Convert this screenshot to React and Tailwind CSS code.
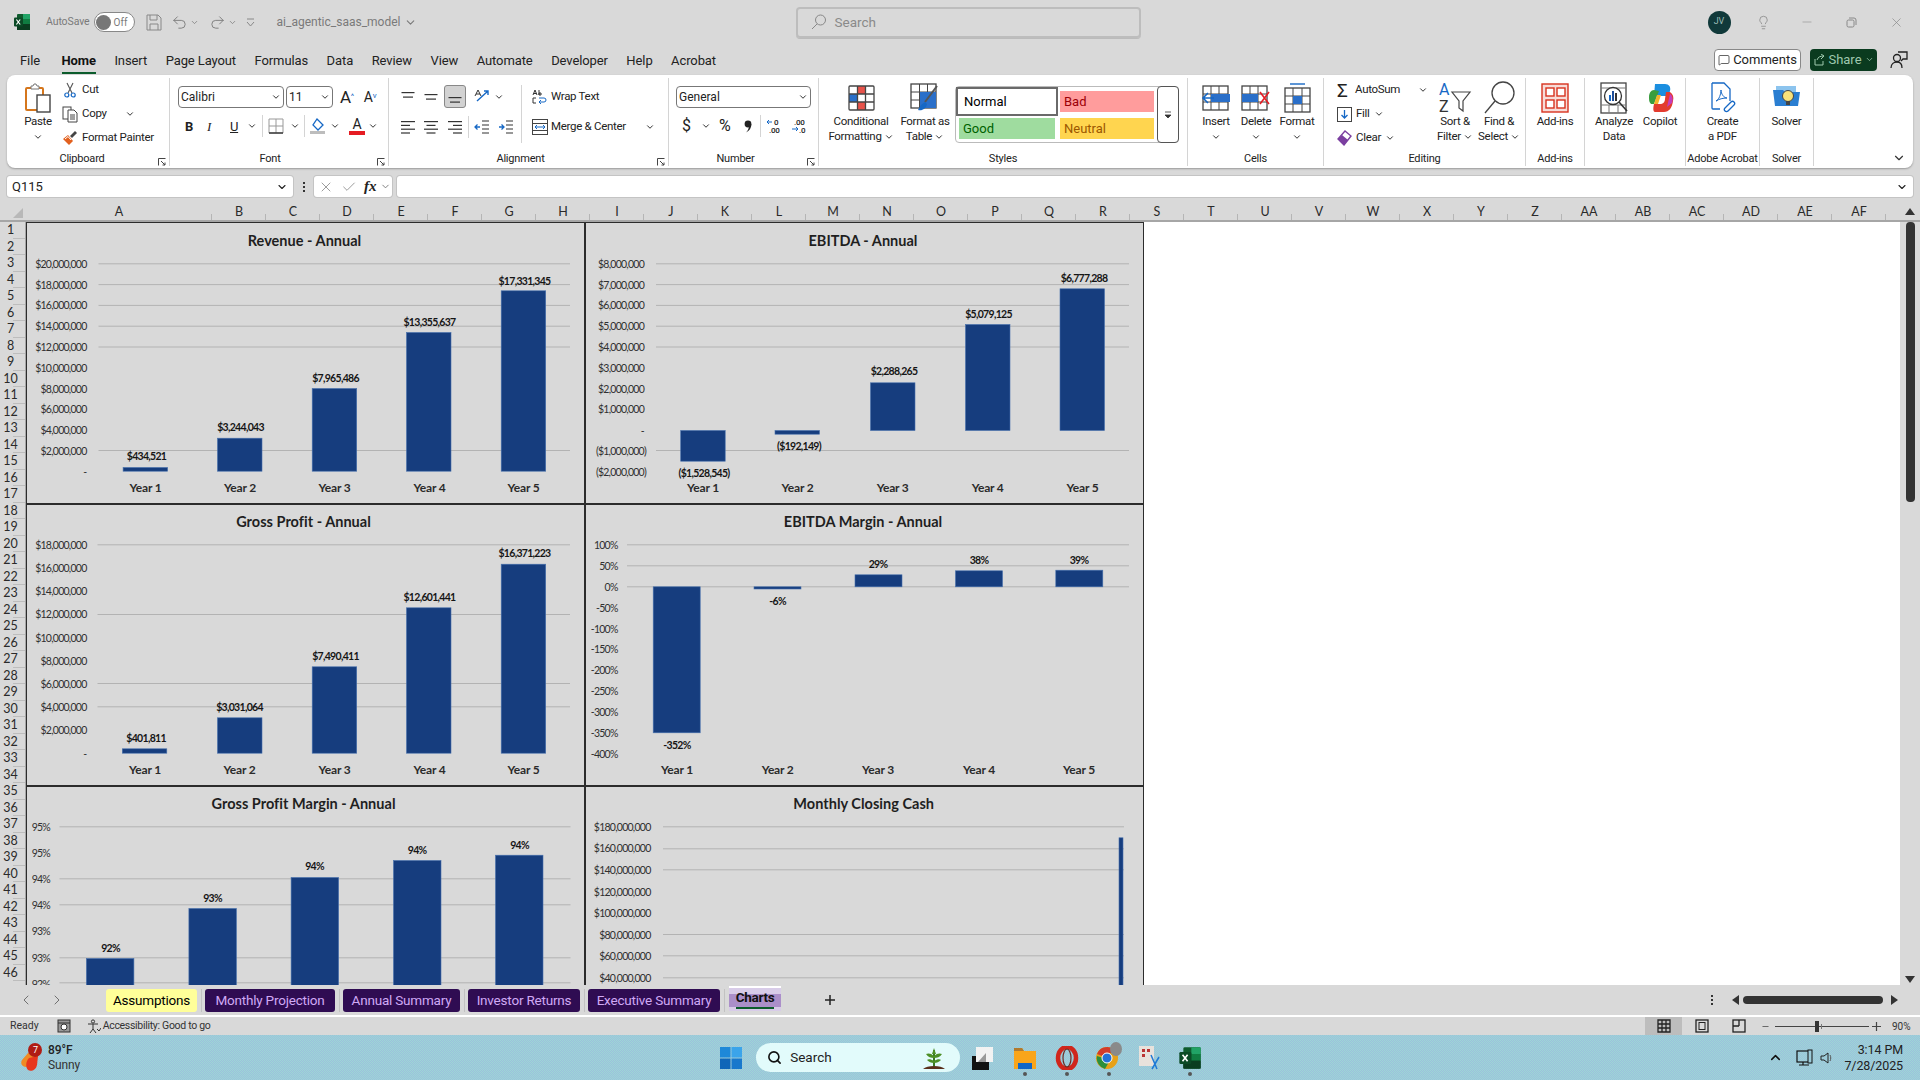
import {
  ChevronDown, ChevronLeft, ChevronRight, ChevronUp, Lightbulb, Minus, X, Check, Search,
  MessageSquare, Undo2, Redo2,
} from 'lucide-react';

const ui = 'font-["Roboto",sans-serif]';

const Chev = ({ className = '' }) => <ChevronDown size={10} strokeWidth={2.4} className={`text-[#333] shrink-0 ${className}`} />;

function ExcelLogo({ size = 18 }) {
  return (
    <svg width={size} height={size} viewBox="0 0 18 18">
      <rect x="4" y="1" width="13" height="16" rx="1" fill="#0f5c2e" />
      <rect x="10" y="1" width="7" height="5" fill="#21a366" />
      <rect x="10" y="6" width="7" height="5" fill="#107c41" />
      <rect x="4" y="11" width="13" height="6" fill="#0a3d20" />
      <rect x="1" y="4.5" width="9" height="9" rx="1" fill="#0b4a26" />
      <path d="M3.4 6.5l3.8 5M7.2 6.5l-3.8 5" stroke="#fff" strokeWidth="1.2" />
    </svg>
  );
}

function Lines({ widths, align = 'left', y = 2, step = 4.5, color = '#333' }) {
  return (
    <svg width="16" height="16" viewBox="0 0 16 16">
      {widths.map((w, i) => {
        const x = align === 'left' ? 1 : align === 'right' ? 15 - w : 8 - w / 2;
        return <rect key={i} x={x} y={y + i * step} width={w} height="1.2" fill={color} />;
      })}
    </svg>
  );
}

function Indent({ dir }) {
  return (
    <svg width="16" height="16" viewBox="0 0 16 16">
      <path d="M8 2h7M8 6h7M8 10h7M8 14h7" stroke="#333" strokeWidth="1.1" />
      <path d={dir === 'out' ? 'M6 8H1M3.5 5.5L1 8l2.5 2.5' : 'M1 8h5M3.5 5.5L6 8l-2.5 2.5'} stroke="#1668c5" strokeWidth="1.3" fill="none" />
    </svg>
  );
}

function GridBase({ children, w = 27, h = 26 }) {
  return (
    <svg width={w} height={h} viewBox="0 0 27 26">
      {children}
      <g stroke="#444" strokeWidth="1.3" fill="none">
        <rect x="1" y="1" width="25" height="24" rx="1" />
        <path d="M1 9h25M1 17h25M9.5 1v24M17.5 1v24" />
      </g>
    </svg>
  );
}

const PasteIcon = () => (
  <svg width="28" height="30" viewBox="0 0 28 30">
    <rect x="2" y="5" width="17" height="22" rx="1" fill="#fff" stroke="#d5761c" strokeWidth="2" />
    <path d="M7 5V3h2l1-2h2l1 2h2v3H7z" fill="#fff" stroke="#777" />
    <rect x="13" y="12" width="13" height="17" fill="#fff" stroke="#444" strokeWidth="1.4" />
  </svg>
);

const CutIcon = () => (
  <svg width="14" height="16" viewBox="0 0 14 16">
    <path d="M4 1l5 10M10 1L5 11" stroke="#555" strokeWidth="1.1" />
    <circle cx="3.8" cy="13" r="2" fill="none" stroke="#1668c5" strokeWidth="1.2" />
    <circle cx="10.2" cy="13" r="2" fill="none" stroke="#1668c5" strokeWidth="1.2" />
  </svg>
);

const CopyIcon = () => (
  <svg width="16" height="17" viewBox="0 0 16 17">
    <rect x="1" y="1" width="8" height="12" fill="#fff" stroke="#444" />
    <path d="M6 4h6l3 3v9H6z" fill="#fff" stroke="#444" />
    <path d="M8 9h5M8 11h5M8 13h5" stroke="#444" />
  </svg>
);

const PainterIcon = () => (
  <svg width="16" height="16" viewBox="0 0 16 16">
    <path d="M1 9l5-4 5 6-4 4z" fill="#e2611f" />
    <path d="M3 9l3-2.5 3 3.5" stroke="#fff" fill="none" />
    <path d="M8 6l5-5 2 2-5 5z" fill="#444" />
  </svg>
);

function BigButton({ icon, lines, chev, className = '' }) {
  return (
    <div className={`flex flex-col items-center shrink-0 ${className}`}>
      <div className="h-[33px] flex items-center justify-center mt-[3px]">{icon}</div>
      <div className="text-center leading-[15px] whitespace-nowrap">
        {lines.map((l, i) => (
          <div key={l} className="flex items-center justify-center gap-[2px]">
            {l}
            {chev === 'inline' && i === lines.length - 1 && <Chev />}
          </div>
        ))}
        {chev === 'below' && <div className="flex justify-center mt-[3px]"><Chev /></div>}
      </div>
    </div>
  );
}

function Group({ label, launcher, className, labelClass = '', children }) {
  return (
    <div className={`relative flex flex-col shrink-0 border-r border-[#d4d4d4] ${className}`}>
      <div className="flex-1 flex min-h-0">{children}</div>
      <div className={`h-[14px] text-center text-[11px] tracking-[-0.2px] leading-[14px] whitespace-nowrap ${labelClass}`}>{label}</div>
      {launcher && (
        <svg width="8" height="8" viewBox="0 0 8 8" className="absolute right-[3px] bottom-[0px]">
          <path d="M.5 7.5v-7h7M3 3l4 4M4.5 7H7V4.5" stroke="#444" fill="none" />
        </svg>
      )}
    </div>
  );
}

const Dropdown = ({ children, className }) => (
  <div className={`h-[22px] flex items-center justify-between pl-[2px] pr-[2px] bg-white border border-[#777] rounded-[4px] text-[12px] tracking-normal ${className}`}>
    {children}
    <Chev />
  </div>
);

const Sep = ({ className = '' }) => <div className={`w-px bg-[#d4d4d4] shrink-0 ${className}`} />;

function Ribbon() {
  return (
    <div className="mx-[7px] h-[93px] bg-white rounded-[8px] shadow-[0_1px_2px_#999] flex pt-[3px] pb-[2px] text-[11.5px] tracking-[-0.3px] text-[#222] leading-none">
      <Group label="Clipboard" launcher className="w-[163px]" labelClass="pr-[12px]">
        <BigButton className="w-[46px] ml-[8px]" icon={<PasteIcon />} lines={['Paste']} chev="below" />
        <div className="flex flex-col ml-[1px]">
          <div className="h-[24px] flex items-center gap-[4px]"><span className="w-[16px] flex justify-center"><CutIcon /></span>Cut</div>
          <div className="h-[24px] flex items-center gap-[4px]"><CopyIcon />Copy<Chev className="ml-[14px]" /></div>
          <div className="h-[24px] flex items-center gap-[4px] whitespace-nowrap"><PainterIcon />Format Painter</div>
        </div>
      </Group>

      <Group label="Font" launcher className="w-[219px]" labelClass="pr-[18px]">
        <div className="flex flex-col pl-[8px] pt-[8px]">
          <div className="flex items-center">
            <Dropdown className="w-[106px]">Calibri</Dropdown>
            <Dropdown className="w-[47px] ml-[2px]">11</Dropdown>
            <span className="ml-[7px] text-[17px] leading-none">A<sup className="text-[8px] text-[#1668c5]">^</sup></span>
            <span className="ml-[10px] text-[14px] leading-none">A<sup className="text-[8px] text-[#1668c5]">v</sup></span>
          </div>
          <div className="flex items-center h-[22px] mt-[7px] pl-[7px]">
            <span className="w-[22px] font-bold text-[13px]">B</span>
            <span className="w-[23px] italic text-[13px] font-['Liberation_Serif',serif]">I</span>
            <span className="w-[17px] underline text-[13px]">U</span>
            <Chev />
            <Sep className="h-[22px] ml-[5px]" />
            <svg width="16" height="16" viewBox="0 0 16 16" className="ml-[5px]"><path d="M1 1h14v14H1zM8 1v14M1 8h14" stroke="#999" fill="none" /><path d="M1 15h14" stroke="#333" strokeWidth="1.4" /></svg>
            <Chev className="ml-[6px]" />
            <Sep className="h-[22px] ml-[4px]" />
            <svg width="18" height="18" viewBox="0 0 18 18" className="ml-[4px]"><path d="M8 2l6 6-5 5-5-5z" fill="#fff" stroke="#1668c5" strokeWidth="1.3" /><rect x="1" y="14" width="15" height="3" fill="#bdbdbd" /></svg>
            <Chev className="ml-[3px]" />
            <div className="ml-[9px] flex flex-col items-center w-[16px]">
              <span className="text-[14px] leading-[14px]">A</span>
              <span className="w-[16px] h-[4px] bg-[#e51c23]" />
            </div>
            <Chev className="ml-[3px]" />
          </div>
        </div>
      </Group>

      <Group label="Alignment" launcher className="w-[280px]" labelClass="pr-[16px]">
        <div className="flex flex-col pl-[11px] pt-[7px]">
          <div className="flex items-center h-[23px]">
            <Lines widths={[13, 10]} align="center" y={3} />
            <div className="ml-[7px]"><Lines widths={[13, 10]} align="center" y={5} /></div>
            <div className="ml-[5px] w-[22px] h-[23px] rounded-[3px] border border-[#888] bg-[#d2d2d2] flex items-center justify-center"><Lines widths={[13, 10]} align="center" y={8} /></div>
            <svg width="17" height="17" viewBox="0 0 17 17" className="ml-[8px]"><path d="M3 13L14 3M10 3h4v4" stroke="#1668c5" strokeWidth="1.4" fill="none" /><path d="M1 8l3-6 3 6M2 6h4" stroke="#333" fill="none" /></svg>
            <Chev className="ml-[3px]" />
          </div>
          <div className="flex items-center h-[23px] mt-[7px]">
            <Lines widths={[14, 9, 14, 9]} y={2} step={3.8} />
            <div className="ml-[7px]"><Lines widths={[14, 9, 14, 9]} align="center" y={2} step={3.8} /></div>
            <div className="ml-[8px]"><Lines widths={[14, 9, 14, 9]} align="right" y={2} step={3.8} /></div>
            <Sep className="h-[22px] ml-[5px]" />
            <div className="ml-[5px]"><Indent dir="out" /></div>
            <div className="ml-[8px]"><Indent dir="in" /></div>
          </div>
        </div>
        <Sep className="h-[58px] mt-[7px] ml-[7px]" />
        <div className="flex flex-col pl-[10px] pt-[7px]">
          <div className="flex items-center h-[23px] gap-[3px] whitespace-nowrap">
            <svg width="16" height="17" viewBox="0 0 16 17"><path d="M1 7l2-5 2 5M1.5 5.5h3M7 2v5M7 5h2v2H7z" stroke="#333" fill="none" /><path d="M4 10H1v5h3" stroke="#333" fill="none" /><path d="M7 14h5a2 2 0 0 0 0-4H7M7 14l2-2M7 14l2 2" stroke="#1668c5" fill="none" /></svg>
            Wrap Text
          </div>
          <div className="flex items-center h-[23px] mt-[7px] whitespace-nowrap">
            <svg width="16" height="16" viewBox="0 0 16 16" className="mr-[3px]"><rect x=".5" y=".5" width="15" height="15" fill="#fff" stroke="#444" /><path d="M.5 4.5h15M.5 11.5h15" stroke="#444" /><path d="M3 8h10M3 8l2-2M3 8l2 2M13 8l-2-2M13 8l-2 2" stroke="#1668c5" fill="none" /></svg>
            Merge &amp; Center
            <Chev className="ml-[19px]" />
          </div>
        </div>
      </Group>

      <Group label="Number" launcher className="w-[150px]" labelClass="pr-[16px]">
        <div className="flex flex-col pl-[7px] pt-[8px]">
          <Dropdown className="w-[135px]">General</Dropdown>
          <div className="flex items-center h-[22px] mt-[7px] pl-[6px]">
            <span className="text-[16px] w-[10px]">$</span>
            <Chev className="ml-[9px]" />
            <span className="text-[16px] ml-[8px] w-[18px]">%</span>
            <svg width="8" height="13" viewBox="0 0 8 13" className="ml-[7px]"><circle cx="4" cy="4" r="3.4" fill="#222" /><path d="M7.4 4c0 4-2 7-5.4 8.5C4 10.5 5 8 5 6z" fill="#222" /></svg>
            <Sep className="h-[22px] ml-[8px]" />
            <svg width="16" height="16" viewBox="0 0 16 16" className="ml-[5px]"><text x="8" y="7" fontSize="8" fontWeight="500" fill="#222">0</text><text x="3" y="15" fontSize="8" fontWeight="500" fill="#222">.00</text><path d="M6 4H1M1 4l2-2M1 4l2 2" stroke="#1668c5" fill="none" /></svg>
            <svg width="16" height="16" viewBox="0 0 16 16" className="ml-[9px]"><text x="3" y="7" fontSize="8" fontWeight="500" fill="#222">.00</text><text x="8" y="15" fontSize="8" fontWeight="500" fill="#222">.0</text><path d="M1 11h6M7 11l-2-2M7 11l-2 2" stroke="#1668c5" fill="none" /></svg>
          </div>
        </div>
      </Group>

      <Group label="Styles" className="w-[369px]">
        <BigButton
          className="w-[66px] ml-[9px]"
          icon={(
            <GridBase>
              <rect x="9.5" y="1" width="8" height="8" fill="#e8534b" />
              <rect x="9.5" y="17" width="8" height="8" fill="#e8534b" />
              <rect x="1" y="9" width="8.5" height="8" fill="#2a6fc9" />
            </GridBase>
          )}
          lines={['Conditional', 'Formatting']}
          chev="inline"
        />
        <BigButton
          className="w-[56px] ml-[3px]"
          icon={(
            <svg width="30" height="32" viewBox="0 0 30 32">
              <rect x="1" y="2" width="25" height="24" fill="#fff" stroke="#444" strokeWidth="1.3" />
              <path d="M1 10h25M1 18h25M9.5 2v24M17.5 2v24" stroke="#444" />
              <rect x="10" y="10" width="16" height="16" fill="#2a6fc9" />
              <path d="M27 4L15 20" stroke="#555" strokeWidth="2" />
              <path d="M15 20l-4 3-3 5c4 1 8-1 9-6z" fill="#1668c5" />
            </svg>
          )}
          lines={['Format as', 'Table']}
          chev="inline"
        />
        <div className="ml-[2px] mt-[8px] h-[57px] w-[224px] flex border border-[#bbb] rounded-[4px] bg-white shrink-0 tracking-normal">
          <div className="flex-1 grid grid-cols-[102px_96px] grid-rows-[29px_26px] text-[13px] leading-none">
            <div className="flex items-center pl-[6px] bg-white border-2 border-[#6a6a6a] text-black">Normal</div>
            <div className="flex items-center pl-[4px] bg-[#ff9c9c] text-[#9c0006] my-[4px] ml-[2px] mr-[0px]">Bad</div>
            <div className="flex items-center pl-[4px] bg-[#9fdc9f] text-[#006100] mx-[3px] mb-[3px] mt-[2px]">Good</div>
            <div className="flex items-center pl-[4px] bg-[#ffd54f] text-[#9c5700] ml-[2px] mb-[3px] mt-[2px]">Neutral</div>
          </div>
          <div className="w-[22px] -my-px -mr-px border border-[#555] rounded-[4px] flex items-center justify-center bg-white">
            <svg width="8" height="8" viewBox="0 0 8 8"><path d="M1 1h6M1 4l3 3 3-3z" stroke="#333" fill="#333" strokeWidth=".8" /></svg>
          </div>
        </div>
      </Group>

      <Group label="Cells" className="w-[136px]">
        <BigButton
          className="w-[40px] ml-[8px]"
          icon={(
            <svg width="30" height="26" viewBox="0 0 30 26">
              <rect x="2" y="1" width="25" height="24" fill="#fff" stroke="#444" strokeWidth="1.3" />
              <path d="M2 9h25M2 17h25M10 1v24M18 1v24" stroke="#444" />
              <rect x="10" y="9" width="19" height="8" fill="#2a6fc9" />
              <path d="M13 13H2M7 8l-5 5 5 5" stroke="#1668c5" strokeWidth="1.6" fill="none" />
            </svg>
          )}
          lines={['Insert']}
          chev="below"
        />
        <BigButton
          className="w-[40px]"
          icon={(
            <svg width="30" height="26" viewBox="0 0 30 26">
              <rect x="1" y="1" width="25" height="24" fill="#fff" stroke="#444" strokeWidth="1.3" />
              <path d="M1 9h25M1 17h25M9 1v24M17 1v24" stroke="#444" />
              <rect x="1" y="9" width="16" height="8" fill="#2a6fc9" />
              <path d="M19 7l9 12M28 7l-9 12" stroke="#e51c23" strokeWidth="1.6" />
            </svg>
          )}
          lines={['Delete']}
          chev="below"
        />
        <BigButton
          className="w-[42px]"
          icon={(
            <svg width="27" height="32" viewBox="0 0 27 32">
              <path d="M6 2h15" stroke="#1668c5" strokeWidth="1.4" />
              <rect x="1" y="6" width="25" height="24" fill="#fff" stroke="#444" strokeWidth="1.3" />
              <path d="M1 14h25M1 22h25M9 6v24M18 6v24" stroke="#444" />
              <rect x="9" y="14" width="9" height="8" fill="#2a6fc9" />
            </svg>
          )}
          lines={['Format']}
          chev="below"
        />
      </Group>

      <Group label="Editing" className="w-[202px]">
        <div className="flex flex-col ml-[13px] w-[97px]">
          <div className="h-[24px] flex items-center gap-[3px]"><span className="text-[19px] leading-none w-[15px]">Σ</span>AutoSum<Chev className="ml-[15px]" /></div>
          <div className="h-[24px] flex items-center gap-[4px]">
            <svg width="15" height="15" viewBox="0 0 15 15"><rect x=".5" y=".5" width="14" height="14" fill="#fff" stroke="#444" /><path d="M7.5 3v8M4.5 8l3 3 3-3" stroke="#1668c5" strokeWidth="1.3" fill="none" /></svg>
            Fill<Chev />
          </div>
          <div className="h-[24px] flex items-center gap-[4px]">
            <svg width="15" height="16" viewBox="0 0 15 16"><path d="M1 9l7-8 6 5-7 9z" fill="#fff" stroke="#7b3fa0" strokeWidth="1.4" /><path d="M1 9l4-4 6 5-4 5z" fill="#7b3fa0" /></svg>
            Clear<Chev />
          </div>
        </div>
        <BigButton
          className="w-[42px]"
          icon={(
            <svg width="34" height="33" viewBox="0 0 34 33">
              <text x="1" y="14" fontSize="16" fill="#1668c5">A</text>
              <text x="1" y="31" fontSize="16" fill="#333">Z</text>
              <path d="M14 11h18l-7 9v10l-4-3v-7z" fill="#fff" stroke="#444" strokeWidth="1.2" />
            </svg>
          )}
          lines={['Sort &', 'Filter']}
          chev="inline"
        />
        <BigButton
          className="w-[42px] ml-[2px]"
          icon={(
            <svg width="32" height="33" viewBox="0 0 32 33">
              <circle cx="20" cy="12" r="11" fill="#fff" stroke="#444" strokeWidth="1.3" />
              <path d="M12 20L2 32" stroke="#444" strokeWidth="1.3" />
            </svg>
          )}
          lines={['Find &', 'Select']}
          chev="inline"
        />
      </Group>

      <Group label="Add-ins" className="w-[59px]">
        <BigButton
          className="w-full"
          icon={(
            <svg width="28" height="30" viewBox="0 0 28 30">
              <rect x="1" y="1" width="26" height="28" fill="#f7dcd8" stroke="#d8321e" strokeWidth="1.4" />
              <rect x="5" y="5" width="8" height="8" fill="#fff" stroke="#d8321e" strokeWidth="1.4" />
              <rect x="16" y="5" width="8" height="8" fill="#fff" stroke="#d8321e" strokeWidth="1.4" />
              <rect x="5" y="17" width="8" height="8" fill="#fff" stroke="#d8321e" strokeWidth="1.4" />
              <rect x="16" y="17" width="8" height="8" fill="#fff" stroke="#d8321e" strokeWidth="1.4" />
            </svg>
          )}
          lines={['Add-ins']}
        />
      </Group>

      <Group label="" className="w-[101px]">
        <BigButton
          className="w-[50px] ml-[4px]"
          icon={(
            <svg width="28" height="32" viewBox="0 0 28 32">
              <rect x="1" y="1" width="25" height="30" fill="#fff" stroke="#444" strokeWidth="1.3" />
              <path d="M1 6h25M1 23h25M9 23v8M18 23v8" stroke="#777" />
              <circle cx="13" cy="14" r="8.5" fill="#fff" stroke="#333" strokeWidth="1.3" />
              <rect x="9" y="13" width="2" height="6" fill="#1668c5" />
              <rect x="12" y="9" width="2" height="10" fill="#1f4e99" />
              <rect x="15" y="11" width="2" height="8" fill="#333" />
              <path d="M19 20l8 9" stroke="#333" strokeWidth="1.6" />
            </svg>
          )}
          lines={['Analyze', 'Data']}
        />
        <BigButton
          className="w-[42px]"
          icon={(
            <svg width="29" height="32" viewBox="0 0 29 32">
              <path d="M9 2h10c4 0 6 3 5 7l-2 5H8z" fill="#1b8fe0" />
              <path d="M3 15c0-4 2-7 5-7l5 1-5 13H5c-2-2-2-4-2-7z" fill="#3a9d3e" />
              <path d="M8 22l3-9h4l-3 9z" fill="#f4b32a" />
              <path d="M20 10h4c3 2 4 5 3 9-1 7-4 11-9 11H9c-2 0-2-4-1-8h6c3 0 5-2 5-5z" fill="#e33b2e" />
              <path d="M24 12c3 2 3 6 2 9l-5 4z" fill="#c43dbb" />
            </svg>
          )}
          lines={['Copilot']}
        />
      </Group>

      <Group label="Adobe Acrobat" className="w-[74px]">
        <BigButton
          className="w-full"
          icon={(
            <svg width="26" height="32" viewBox="0 0 26 32">
              <path d="M2 1h12l6 6v12M10 27H3a1 1 0 0 1-1-1V1" fill="#fff" stroke="#1668c5" strokeWidth="1.3" />
              <path d="M6 19c3-1 5-7 5-11 0 4 3 8 6 8-4 0-8 1-11 3z" fill="none" stroke="#1668c5" />
              <path d="M15 26l6-6a2 2 0 0 1 3 3l-6 6a2 2 0 0 1-3-3z" fill="none" stroke="#1668c5" strokeWidth="1.3" />
            </svg>
          )}
          lines={['Create', 'a PDF']}
        />
      </Group>

      <Group label="Solver" className="w-[54px]">
        <BigButton
          className="w-full"
          icon={(
            <svg width="30" height="28" viewBox="0 0 30 28">
              <path d="M4 2h20v8H4z" fill="#8cc4ee" />
              <path d="M1 6h10l2 2h15l-2 14H3z" fill="#2a7ed1" />
              <circle cx="16" cy="12" r="5.5" fill="#f9e27a" stroke="#444" />
              <rect x="14" y="17" width="4" height="4" fill="#444" />
            </svg>
          )}
          lines={['Solver']}
        />
      </Group>

      <div className="flex-1 flex items-end justify-end pr-[7px] pb-[1px]">
        <ChevronDown size={14} className="text-[#333]" />
      </div>
    </div>
  );
}

const chartData = [
  {
    title: 'Revenue - Annual', x: 26, y: 222, titleX: 305, titleY: 241,
    gx: [99, 570.5], grid: [264.3, 285.1, 305.9, 326.7, 347.5, 451], right: 87,
    axis: [['$20,000,000', 264], ['$18,000,000', 285], ['$16,000,000', 305.5], ['$14,000,000', 326], ['$12,000,000', 347], ['$10,000,000', 368], ['$8,000,000', 389], ['$6,000,000', 409.5], ['$4,000,000', 430], ['$2,000,000', 451], ['-', 472]],
    base: 471.7, bw: 44.5,
    bars: [[123.6, 468], [218, 438.7], [312.7, 389], [407, 333], [501.7, 291.3]],
    labels: [['$434,521', 147, 456.7], ['$3,244,043', 241, 427], ['$7,965,486', 336, 378.7], ['$13,355,637', 430, 322], ['$17,331,345', 525, 281]],
    years: [146, 240.5, 335, 430, 524], yearY: 488,
  },
  {
    title: 'EBITDA - Annual', x: 585.5, y: 222, titleX: 864, titleY: 241,
    gx: [657, 1130], grid: [264.3, 285.1, 305.9, 326.7, 347.5, 451], right: 645,
    axis: [['$8,000,000', 264], ['$7,000,000', 285], ['$6,000,000', 305.5], ['$5,000,000', 326], ['$4,000,000', 347], ['$3,000,000', 368], ['$2,000,000', 389], ['$1,000,000', 409.5], ['-', 431], ['($1,000,000)', 451, 647], ['($2,000,000)', 472, 647]],
    base: 431, bw: 44.5,
    bars: [[681.7, 461.7], [776, 434.7], [871.5, 383.3], [966.5, 325], [1061, 289.3]],
    labels: [['($1,528,545)', 705, 473.7], ['($192,149)', 800, 446], ['$2,288,265', 895, 371.7], ['$5,079,125', 989.5, 314], ['$6,777,288', 1085, 278.7]],
    years: [704, 798.5, 893.7, 988.7, 1083.5], yearY: 488,
  },
  {
    title: 'Gross Profit - Annual', x: 26, y: 504, titleX: 304, titleY: 522.3,
    gx: [98, 570.5], grid: [545.3, 615, 684, 707.3], right: 87,
    axis: [['$18,000,000', 545.5], ['$16,000,000', 568], ['$14,000,000', 591.5], ['$12,000,000', 614.5], ['$10,000,000', 638], ['$8,000,000', 661], ['$6,000,000', 684.5], ['$4,000,000', 707.5], ['$2,000,000', 730.5], ['-', 754]],
    base: 753.7, bw: 44.5,
    bars: [[122.8, 749.3], [218, 718.3], [312.7, 667.3], [407, 608.3], [501.7, 564.7]],
    labels: [['$401,811', 146.6, 738.3], ['$3,031,064', 240, 707.7], ['$7,490,411', 336, 656], ['$12,601,441', 430, 597.3], ['$16,371,223', 525, 553.7]],
    years: [145.5, 240, 335, 430, 524], yearY: 770,
  },
  {
    title: 'EBITDA Margin - Annual', x: 585.5, y: 504, titleX: 864, titleY: 522.3,
    gx: [628, 1130], grid: [545.3, 566.3, 587.3], right: 618.6,
    axis: [['100%', 545.5], ['50%', 566], ['0%', 587], ['-50%', 608], ['-100%', 629], ['-150%', 649.5], ['-200%', 670.5], ['-250%', 691.5], ['-300%', 712], ['-350%', 733], ['-400%', 754]],
    base: 587.3, bw: 47,
    bars: [[654.2, 733.3], [755, 589.5], [856, 575.3], [956.5, 571.3], [1056.8, 570.7]],
    labels: [['-352%', 678, 745.7], ['-6%', 778.6, 601.3], ['29%', 879, 564.3], ['38%', 980, 560.7], ['39%', 1080, 560]],
    years: [678, 778.6, 879, 980, 1080], yearY: 770,
  },
  {
    title: 'Gross Profit Margin - Annual', x: 26, y: 786, titleX: 304, titleY: 804,
    gx: [60, 571], grid: [827.3, 879.3, 905.3, 958.3, 983.3], right: 50.5,
    axis: [['95%', 827.5], ['95%', 853], ['94%', 879.5], ['94%', 905.5], ['93%', 931], ['93%', 958], ['92%', 984]],
    base: 990, bw: 47.5,
    bars: [[86.9, 959], [189.4, 909], [291.6, 878], [394, 861], [496, 855.7]],
    labels: [['92%', 111, 948], ['93%', 213, 898], ['94%', 315, 866.7], ['94%', 417.6, 850], ['94%', 520, 845]],
    years: [], yearY: 0,
  },
  {
    title: 'Monthly Closing Cash', x: 585.5, y: 786, titleX: 864.7, titleY: 804,
    gx: [664, 1125], grid: [827.3, 849.3, 870.3, 935, 956.3, 978.3], right: 651.5,
    axis: [['$180,000,000', 827.5], ['$160,000,000', 848.5], ['$140,000,000', 870], ['$120,000,000', 892], ['$100,000,000', 913], ['$80,000,000', 935], ['$60,000,000', 956.5], ['$40,000,000', 978.5]],
    base: 990, bw: 4,
    bars: [[1120, 838.3]],
    labels: [],
    years: [], yearY: 0,
  },
];

const chartFont = { fontFamily: 'Lato, sans-serif' };

function Chart({ c }) {
  const w = 556;
  const h = 279;
  return (
    <div className="border-[1.5px] border-[#2c2c2c] bg-[#d9d9d9] overflow-hidden">
      <svg width={w} height={h} viewBox={`${c.x + 1.5} ${c.y + 1.5} ${w} ${h}`} className="block" style={chartFont}>
        {c.grid.map((y) => (
          <line key={y} x1={c.gx[0]} x2={c.gx[1]} y1={y} y2={y} stroke="#b3b3b3" strokeWidth="1" />
        ))}
        {c.bars.map(([x, top]) => (
          <rect
            key={x}
            x={x}
            y={Math.min(top, c.base)}
            width={c.bw}
            height={Math.abs(c.base - top)}
            fill="#163d7e"
            stroke="#4670ad"
            strokeWidth="0.6"
          />
        ))}
        <text x={c.titleX} y={c.titleY} textAnchor="middle" dominantBaseline="central" fontSize="14.5" fontWeight="700" letterSpacing="0.02" fill="#1f1f1f">{c.title}</text>
        {c.axis.map(([t, y, r]) => (
          <text key={t + y} x={r ?? c.right} y={y} textAnchor="end" dominantBaseline="central" fontSize="10.5" letterSpacing="-0.75" fill="#303030">{t}</text>
        ))}
        {c.labels.map(([t, x, y]) => (
          <text key={t + x} x={x} y={y} textAnchor="middle" dominantBaseline="central" fontSize="10.5" fontWeight="700" letterSpacing="-0.7" fill="#151515">{t}</text>
        ))}
        {c.years.map((x, i) => (
          <text key={x} x={x} y={c.yearY} textAnchor="middle" dominantBaseline="central" fontSize="12" fontWeight="700" letterSpacing="-0.2" fill="#2b2b2b">{`Year ${i + 1}`}</text>
        ))}
      </svg>
    </div>
  );
}

const columns = ['A', 'B', 'C', 'D', 'E', 'F', 'G', 'H', 'I', 'J', 'K', 'L', 'M', 'N', 'O', 'P', 'Q', 'R', 'S', 'T', 'U', 'V', 'W', 'X', 'Y', 'Z', 'AA', 'AB', 'AC', 'AD', 'AE', 'AF'];
const rows = Array.from({ length: 46 }, (_, i) => i + 1);

function ColumnHeaders() {
  return (
    <div className="h-[23px] mt-[2px] flex border-b-2 border-[#a6a6a6] font-['Lato',sans-serif] text-[12.5px] text-[#2a2a2a]">
      <div className="w-[26px] flex items-end justify-end pr-[2px] pb-[1px] shrink-0">
        <svg width="12" height="12" viewBox="0 0 12 12"><path d="M11 1v10H1z" fill="#b8b8b8" /></svg>
      </div>
      {columns.map((c) => (
        <div
          key={c}
          className={`relative flex items-end justify-center leading-[17px] shrink-0 after:absolute after:right-0 after:bottom-0 after:w-px after:h-[6px] after:bg-[#b5b5b5] ${c === 'A' ? 'w-[186px]' : 'w-[54px]'}`}
        >
          {c}
        </div>
      ))}
      <svg width="10" height="7" viewBox="0 0 10 7" className="ml-auto mr-[5px] mt-[9px]"><path d="M5 0l5 7H0z" fill="#333" /></svg>
    </div>
  );
}

function Sheet() {
  return (
    <div className="h-[763px] flex overflow-hidden">
      <div className="w-[26px] shrink-0 border-r border-[#a6a6a6] font-['Lato',sans-serif] text-[12.5px] text-[#2a2a2a]">
        {rows.map((r) => (
          <div key={r} className="relative h-[16.5px] flex items-center justify-center pr-[4px] leading-none after:absolute after:right-0 after:bottom-0 after:w-[12px] after:h-px after:bg-[#bdbdbd]">{r}</div>
        ))}
      </div>
      <div className="flex-1 flex bg-white min-w-0">
        <div className="grid grid-cols-[559px_559px] grid-rows-[282px_282px_282px] shrink-0">
          {chartData.map((c) => <Chart key={c.title} c={c} />)}
        </div>
        <div className="flex-1" />
        <div className="w-[20px] bg-[#d9d9d9] flex flex-col items-center shrink-0">
          <div className="w-[9px] h-[280px] rounded-[4px] bg-[#333]" />
          <svg width="10" height="7" viewBox="0 0 10 7" className="mt-auto mb-[2px]"><path d="M5 7L0 0h10z" fill="#333" /></svg>
        </div>
      </div>
    </div>
  );
}

const sheetTabs = [
  { name: 'Assumptions', w: 'w-[91px]', cls: 'bg-[#ffff99] text-black' },
  { name: 'Monthly Projection', w: 'w-[130px]', cls: 'bg-[#2f0c52] text-[#d0a9f5]' },
  { name: 'Annual Summary', w: 'w-[117px]', cls: 'bg-[#2f0c52] text-[#d0a9f5]' },
  { name: 'Investor Returns', w: 'w-[112px]', cls: 'bg-[#2f0c52] text-[#d0a9f5]' },
  { name: 'Executive Summary', w: 'w-[132px]', cls: 'bg-[#2f0c52] text-[#d0a9f5]' },
];

function TabBar() {
  return (
    <div className={`h-[30px] flex items-center text-[13.5px] ${ui}`}>
      <ChevronLeft size={16} strokeWidth={1.2} className="ml-[18px] text-[#555]" />
      <ChevronRight size={16} strokeWidth={1.2} className="ml-[15px] text-[#555]" />
      <div className="flex items-center h-full ml-[41px] gap-[8px]">
        {sheetTabs.map((t) => (
          <div key={t.name} className={`relative h-[23px] flex items-center justify-center rounded-[3px] tracking-[-0.2px] whitespace-nowrap after:absolute after:-right-[5px] after:top-0 after:h-full after:w-px after:bg-[#c2c2c2] ${t.w} ${t.cls}`}>{t.name}</div>
        ))}
        <div className="relative self-start mt-[1px] w-[52px] h-[25px] border-t-2 border-white bg-[linear-gradient(#d8cce8_0,#d8cce8_6px,#ab8fc9_6px,#ab8fc9_19px,#d8cce8_19px)] ml-[1px] flex flex-col items-center pt-[2px]">
          <span className="font-bold text-[13.5px] tracking-[-0.3px] leading-[14px] text-[#111]">Charts</span>
          <div className="absolute bottom-[2px] w-[38px] h-[2px] bg-[#0c5c2c]" />
        </div>
      </div>
      <svg width="12" height="12" viewBox="0 0 12 12" className="ml-[43px]"><path d="M6 1v10M1 6h10" stroke="#222" strokeWidth="1.5" /></svg>
      <div className="ml-auto flex items-center">
        <div className="flex flex-col gap-[2px]">
          <span className="w-[2px] h-[2px] bg-[#333]" />
          <span className="w-[2px] h-[2px] bg-[#333]" />
          <span className="w-[2px] h-[2px] bg-[#333]" />
        </div>
        <svg width="7" height="10" viewBox="0 0 7 10" className="ml-[19px]"><path d="M7 0v10L0 5z" fill="#333" /></svg>
        <div className="ml-[4px] w-[140px] h-[8px] bg-[#333] rounded-[4px]" />
        <svg width="7" height="10" viewBox="0 0 7 10" className="ml-[8px] mr-[22px]"><path d="M0 0v10l7-5z" fill="#333" /></svg>
      </div>
    </div>
  );
}

function StatusBar() {
  return (
    <div className={`h-[20px] border-t-2 border-white flex items-center text-[10.5px] text-[#333] ${ui}`}>
      <span className="ml-[10px]">Ready</span>
      <svg width="14" height="14" viewBox="0 0 14 14" className="ml-[18px]"><rect x="1" y="1" width="12" height="12" fill="#999" stroke="#333" /><circle cx="7" cy="8" r="3" fill="#fff" stroke="#333" /><path d="M1 4h12" stroke="#333" /></svg>
      <svg width="14" height="15" viewBox="0 0 14 15" className="ml-[16px]"><circle cx="6" cy="2.5" r="1.6" fill="none" stroke="#333" /><path d="M1 5h10M6 5v5l-3 4M6 10l3 4" stroke="#333" fill="none" /><path d="M10 10l2 2 2-3" stroke="#333" fill="none" /></svg>
      <span className="ml-[2px] tracking-[-0.3px]">Accessibility: Good to go</span>
      <div className="ml-auto flex items-center h-full">
        <div className="w-[37px] h-full bg-[#bdbdbd] flex items-center justify-center">
          <svg width="14" height="14" viewBox="0 0 14 14"><path d="M1 1h12v12H1zM1 5h12M1 9h12M5 1v12M9 1v12" stroke="#222" strokeWidth="1.3" fill="none" /></svg>
        </div>
        <svg width="14" height="14" viewBox="0 0 14 14" className="ml-[13px]"><rect x="1" y="1" width="12" height="12" fill="none" stroke="#222" strokeWidth="1.3" /><rect x="4" y="3.5" width="6" height="7" fill="none" stroke="#222" /></svg>
        <svg width="14" height="14" viewBox="0 0 14 14" className="ml-[23px]"><rect x="1" y="1" width="12" height="12" fill="none" stroke="#222" strokeWidth="1.3" /><path d="M7 1v6M1 7h6" stroke="#222" strokeWidth="1.3" /></svg>
        <Minus size={9} strokeWidth={2} className="ml-[15px] text-[#444]" />
        <div className="relative ml-[5px] w-[94px] h-px bg-[#444]">
          <div className="absolute left-[40px] -top-[5px] w-[4px] h-[11px] bg-[#333]" />
          <div className="absolute left-[46px] -top-[2px] w-px h-[5px] bg-[#777]" />
        </div>
        <svg width="9" height="9" viewBox="0 0 9 9" className="ml-[3px]"><path d="M4.5 0v9M0 4.5h9" stroke="#444" strokeWidth="1.2" /></svg>
        <span className="ml-[11px] mr-[7px] text-[10px] w-[21px]">90%</span>
      </div>
    </div>
  );
}

const Dot = ({ on }) => <span className={`w-[4px] h-[4px] rounded-full mt-[2px] ${on ? 'bg-[#555]' : 'bg-transparent'}`} />;

function Taskbar() {
  return (
    <div className={`h-[45px] bg-[repeating-conic-gradient(#9dd6d6_0_25%,#9cc0dc_0_50%)] bg-[length:2px_2px] flex items-center text-[#222] ${ui}`}>
      <div className="relative ml-[20px] w-[22px] h-[30px]">
        <svg width="24" height="30" viewBox="0 0 24 30">
          <path d="M8 10L2 17c-2 3 0 7 4 7l10-4 2-9z" fill="#f08a24" />
          <path d="M9 15c-3 3-4 9-1 12 3 2 8 0 9-5l1-9z" fill="#e8361e" />
          <circle cx="15" cy="7" r="7" fill="#b01c14" />
          <text x="13" y="10" fontSize="9" fill="#fff">7</text>
        </svg>
      </div>
      <div className="ml-[6px] flex flex-col text-[12px] leading-[15px] tracking-[-0.1px]">
        <span className="font-medium">89°F</span>
        <span className="text-[#333]">Sunny</span>
      </div>
      <svg width="22" height="22" viewBox="0 0 22 22" className="ml-[640px]">
        <rect width="10.5" height="10.5" fill="#1e88d8" />
        <rect x="11.5" width="10.5" height="10.5" fill="#3ba4ea" />
        <rect y="11.5" width="10.5" height="10.5" fill="#0f66b8" />
        <rect x="11.5" y="11.5" width="10.5" height="10.5" fill="#1878cc" />
      </svg>
      <div className="ml-[14px] w-[204px] h-[29px] rounded-full bg-[#e2fbfb] flex items-center pl-[11px] pr-[6px] text-[13.5px]">
        <Search size={15} strokeWidth={2.6} className="text-[#111]" />
        <span className="ml-[8px]">Search</span>
        <svg width="28" height="27" viewBox="0 0 28 27" className="ml-auto -translate-x-[6px]">
          <path d="M14 22V6" stroke="#3a7a22" strokeWidth="2" />
          <path d="M14 4l-2 6h4zM14 12c-3-3-6-3-8-2 2 3 5 4 8 4M14 12c3-3 6-3 8-2-2 3-5 4-8 4M14 17c-3-2-6-2-7-1 2 2 4 3 7 3M14 17c3-2 6-2 7-1-2 2-4 3-7 3" fill="#4d8f26" />
          <path d="M3 25c4-4 18-4 22 0z" fill="#5a2f1b" />
        </svg>
      </div>
      <div className="ml-[12px] flex flex-col items-center w-[22px] pt-[6px]">
        <svg width="22" height="24" viewBox="0 0 22 24"><rect y="10" width="17" height="14" fill="#111" /><rect x="4" y="1" width="17" height="15" fill="#f2f2f2" /><path d="M6 16l8-9v9z" fill="#999" /></svg>
        <Dot />
      </div>
      <div className="ml-[19px] flex flex-col items-center w-[24px] pt-[6px]">
        <svg width="24" height="24" viewBox="0 0 24 24"><path d="M1 2h8l2 3h12v18H1z" fill="#f9a51a" /><path d="M1 2h8l2 3H1z" fill="#b27a2d" /><rect x="5" y="17" width="14" height="6" fill="#0f66c8" /></svg>
        <Dot on />
      </div>
      <div className="ml-[18px] flex flex-col items-center w-[24px] pt-[6px]">
        <svg width="24" height="24" viewBox="0 0 24 24"><ellipse cx="12" cy="12" rx="9" ry="11" fill="none" stroke="#d0261c" strokeWidth="4.5" /><ellipse cx="12" cy="12" rx="4" ry="9" fill="none" stroke="#6e2a22" strokeWidth="1.2" /></svg>
        <Dot on />
      </div>
      <div className="ml-[17px] flex flex-col items-center w-[26px] pt-[2px]">
        <svg width="26" height="28" viewBox="0 0 26 28">
          <circle cx="11" cy="16" r="11" fill="#e8a118" />
          <path d="M11 5a11 11 0 0 1 10 6H11zM1 12a11 11 0 0 1 10-7v11z" fill="#d23c2c" />
          <path d="M1 14a11 11 0 0 0 8 13l5-9z" fill="#2d8f3c" />
          <circle cx="11" cy="16" r="5" fill="#2472d9" stroke="#fff" />
          <ellipse cx="20" cy="7" rx="6" ry="7" fill="#8a8a8a" />
        </svg>
        <Dot on />
      </div>
      <div className="ml-[17px] flex flex-col items-center w-[22px] pt-[6px]">
        <svg width="22" height="24" viewBox="0 0 22 24"><rect width="15" height="20" fill="#e8e2dc" /><rect x="3" y="3" width="3" height="3" fill="#b33" /><rect x="8" y="3" width="3" height="3" fill="#b33" /><rect x="3" y="8" width="3" height="3" fill="#b33" /><path d="M12 9l6 14M20 11l-7 12" stroke="#1f7ad6" strokeWidth="1.5" /></svg>
        <Dot />
      </div>
      <div className="ml-[17px] flex flex-col items-center w-[24px] pt-[6px]">
        <ExcelLogo size={24} />
        <Dot on />
      </div>
      <ChevronUp size={15} strokeWidth={2.4} className="ml-[566px] text-[#111]" />
      <svg width="18" height="18" viewBox="0 0 18 18" className="ml-[13px]"><rect x="1" y="2" width="12" height="11" fill="none" stroke="#111" strokeWidth="1.2" /><rect x="12" y="1" width="4" height="13" fill="#9ccbd9" stroke="#111" /><path d="M7 13v3M3 16h10" stroke="#111" strokeWidth="1.2" /></svg>
      <svg width="16" height="16" viewBox="0 0 16 16" className="ml-[6px]"><path d="M1 6h3l4-3v10l-4-3H1z" fill="none" stroke="#222" /><path d="M10 5c1 2 1 4 0 6" stroke="#555" fill="none" /></svg>
      <div className="ml-auto mr-[17px] flex flex-col items-end text-[12.5px] leading-[16px] tracking-[-0.1px]">
        <span>3:14 PM</span>
        <span>7/28/2025</span>
      </div>
    </div>
  );
}

const ribbonTabs = ['File', 'Home', 'Insert', 'Page Layout', 'Formulas', 'Data', 'Review', 'View', 'Automate', 'Developer', 'Help', 'Acrobat'];

export default function App() {
  return (
    <div className={`w-[1920px] h-[1080px] overflow-hidden bg-[#d9d9d9] flex flex-col ${ui}`}>
      <div className="h-[44px] flex items-center text-[#7a7a7a] text-[10.5px] shrink-0 [&>*]:shrink-0">
        <div className="ml-[13px]"><ExcelLogo /></div>
        <span className="ml-[15px] tracking-[-0.1px]">AutoSave</span>
        <div className="ml-[4px] w-[41px] h-[20px] rounded-full border border-[#888] bg-white flex items-center pl-[1px]">
          <span className="w-[15px] h-[15px] rounded-full bg-[#777]" />
          <span className="ml-[3px] text-[10px]">Off</span>
        </div>
        <svg width="16" height="17" viewBox="0 0 16 17" className="ml-[11px]"><path d="M1 1h11l3 3v12H1zM4 1v5h7V1M4 16v-6h8v6" fill="none" stroke="#888" /></svg>
        <Undo2 size={17} strokeWidth={1.3} className="ml-[9px]" />
        <ChevronDown size={9} className="ml-[2px]" />
        <Redo2 size={17} strokeWidth={1.3} className="ml-[10px]" />
        <ChevronDown size={9} className="ml-[2px]" />
        <svg width="9" height="9" viewBox="0 0 9 9" className="ml-[9px]"><path d="M1 1h7M1 4l3.5 4L8 4" stroke="#888" fill="none" /></svg>
        <span className="ml-[22px] text-[12px]">ai_agentic_saas_model</span>
        <ChevronDown size={13} className="ml-[3px]" />
        <div className="ml-[379px] w-[345px] h-[31px] rounded-[4px] border-2 border-[#bdbdbd] flex items-center pl-[13px] text-[13.5px] text-[#8a8a8a] shadow-[0_1px_0_#bbb]">
          <svg width="16" height="16" viewBox="0 0 16 16"><circle cx="9.5" cy="6" r="5" fill="none" stroke="#888" /><path d="M6 10l-5 5" stroke="#888" /></svg>
          <span className="ml-[8px]">Search</span>
        </div>
        <div className="ml-[567px] w-[23px] h-[23px] rounded-full bg-[#10393a] text-[#9dbdb8] text-[9px] flex items-center justify-center">JV</div>
        <Lightbulb size={15} strokeWidth={1.1} className="ml-[25px]" />
        <Minus size={14} strokeWidth={1.2} className="ml-[29px] text-[#999]" />
        <svg width="11" height="11" viewBox="0 0 11 11" className="ml-[32px]"><rect x="1" y="3" width="7" height="7" rx="1.5" fill="none" stroke="#888" /><path d="M3 1h5a2 2 0 0 1 2 2v5" fill="none" stroke="#888" /></svg>
        <X size={15} strokeWidth={1.1} className="ml-[32px] text-[#888]" />
      </div>

      <div className="h-[31px] flex items-center text-[13px] text-[#222] shrink-0 pt-[2px]">
        <div className="flex items-center gap-[18.5px] ml-[20px]">
          {ribbonTabs.map((t) => (
            <span key={t} className={`relative whitespace-nowrap tracking-[-0.1px] ${t === 'Home' ? 'font-bold ml-[3px] text-[#111] after:absolute after:left-0 after:right-0 after:-bottom-[4px] after:h-[2px] after:bg-[#0c5c2c]' : ''}`}>{t}</span>
          ))}
        </div>
        <div className="ml-auto flex items-center -mt-[2px]">
          <div className="w-[87px] h-[22px] rounded-[4px] border border-[#888] bg-white flex items-center justify-center gap-[3px] text-[13px]">
            <MessageSquare size={12} strokeWidth={1.4} />
            Comments
          </div>
          <div className="ml-[9px] w-[67px] h-[22px] rounded-[4px] bg-[#0a3b1f] text-[#9fc9ae] flex items-center justify-center gap-[3px] text-[13px]">
            <svg width="12" height="12" viewBox="0 0 12 12"><path d="M2 5v6h8V7M4 6c1-3 3-4 7-4M8 0l3 2-3 3" fill="none" stroke="#9fc9ae" /></svg>
            Share
            <ChevronDown size={9} />
          </div>
          <svg width="18" height="18" viewBox="0 0 18 18" className="ml-[13px] mr-[12px]"><circle cx="7" cy="7" r="3.5" fill="none" stroke="#222" strokeWidth="1.3" /><path d="M1 17c0-4 3-6 6-6s5 2 5 6" fill="none" stroke="#222" strokeWidth="1.3" /><path d="M8 1h9v7h-4l-2 2" fill="none" stroke="#222" strokeWidth="1.3" /></svg>
        </div>
      </div>

      <Ribbon />

      <div className="h-[21px] mt-[8px] mx-[7px] flex items-stretch text-[13px] text-[#222] shrink-0">
        <div className="w-[286px] bg-white rounded-[3px] shadow-[0_0_0_1px_#c4c4c4] flex items-center justify-between pl-[5px] pr-[5px]">
          Q115
          <ChevronDown size={12} strokeWidth={2.2} />
        </div>
        <div className="w-[21px] flex flex-col items-center justify-center gap-[2px]">
          <span className="w-[2px] h-[2px] bg-[#333]" />
          <span className="w-[2px] h-[2px] bg-[#333]" />
          <span className="w-[2px] h-[2px] bg-[#333]" />
        </div>
        <div className="w-[78px] bg-white rounded-[3px] shadow-[0_0_0_1px_#c4c4c4] flex items-center pl-[4px] text-[#777]">
          <X size={16} strokeWidth={1.1} />
          <Check size={16} strokeWidth={1.1} className="ml-[7px]" />
          <span className="ml-[7px] font-['Liberation_Serif',serif] italic font-bold text-[15px] text-[#222] leading-none">fx</span>
          <ChevronDown size={11} className="ml-[3px]" />
        </div>
        <div className="flex-1 ml-[5px] bg-white rounded-[3px] shadow-[0_0_0_1px_#c4c4c4] flex items-center justify-end pr-[5px]">
          <ChevronDown size={12} strokeWidth={2.2} />
        </div>
      </div>

      <ColumnHeaders />
      <Sheet />
      <TabBar />
      <StatusBar />
      <Taskbar />
    </div>
  );
}
